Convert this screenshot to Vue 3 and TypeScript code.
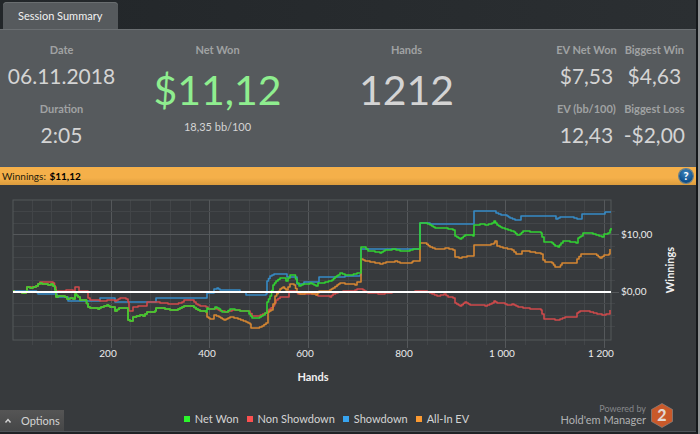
<script setup lang="ts">
interface Stat {
  label: string
  value: string
}

interface Series {
  name: string
  swatch: string
  stroke: string
  points: number[][]
}

const periodStats: Stat[] = [
  { label: 'Date', value: '06.11.2018' },
  { label: 'Duration', value: '2:05' },
]
const evStats: Stat[] = [
  { label: 'EV Net Won', value: '$7,53' },
  { label: 'EV (bb/100)', value: '12,43' },
]
const extremeStats: Stat[] = [
  { label: 'Biggest Win', value: '$4,63' },
  { label: 'Biggest Loss', value: '-$2,00' },
]

// Plot frame in chart units
const left = 13
const right = 611
const top = 15
const bottom = 155

const xTicks = Array.from({ length: 30 }, (_, i) => ({
  x: Math.round(left + (i + 1) * 19.74) - 0.5,
  major: (i + 1) % 5 === 0,
}))
const yTicks = Array.from({ length: 11 }, (_, i) => ({
  y: Math.round(26 + i * 11.5) + 0.5,
  major: i === 2 || i === 7,
}))
const xLabels = [
  { x: 108, text: '200' },
  { x: 207, text: '400' },
  { x: 305, text: '600' },
  { x: 404, text: '800' },
  { x: 502, text: '1 000' },
  { x: 601, text: '1 200' },
]

const parse = (s: string): number[][] => s.split(' ').map((p) => p.split(',').map(Number))

const start =
  '13,106 14,107 22,108 26,107 27,102 30,103 36,101 38,99 40,98 42,99 48,100 51,99 53,101 55,105 56,112 58,111 65,112 67,114 70,113 73,114 75,109 78,112 80,115 85,115 88,122 90,123 98,124 101,122 107,120 110,122 113,122 115,126 119,123 127,123 128,135 130,136 132,136 133,132 140,130 143,131 147,127 155,126 156,123 160,123 165,124 170,125 176,125 180,123 184,121 192,121 196,124 200,126 206,127'

const series: Series[] = [
  {
    name: 'Net Won',
    swatch: '#2bf52b',
    stroke: '#32d232',
    points: parse(
      start +
        ' 207,123 208,124 213,124 215,122 219,124 222,127 226,127 230,124 235,125 240,126 247,126 249,129 252,133 258,133 263,130 265,128 267,117 270,111 273,100 276,96 280,93 284,93 286,96 290,90 294,90 297,98 299,101 303,99 310,98 316,101 318,98 325,97 332,95 335,92 338,90 340,88 345,90 350,90 357,88 360,88 361,62 364,62 368,66 375,67 380,68 385,65 392,64 400,66 407,66 413,64 419,64 420,38 425,38 430,40 435,43 442,43 448,44 453,45 455,51 460,54 465,50 473,51 474,40 480,39 485,40 492,38 494,36 497,40 502,43 508,45 514,47 517,50 520,49 523,46 530,47 541,48 542,52 544,57 552,58 555,61 558,62 561,58 563,56 570,57 576,58 578,53 581,51 583,48 590,48 596,50 602,52 604,49 608,48 610,45 611,43',
    ),
  },
  {
    name: 'Non Showdown',
    swatch: '#fb5050',
    stroke: '#cf4a4b',
    points: parse(
      '13,106 14,107 22,108 26,107 27,102 36,101 40,97 53,98 56,106 63,106 66,105 73,106 75,102 77,102 79,106 86,106 88,113 90,115 100,116 107,115 115,116 120,113 126,114 128,117 129,126 132,126 133,122 138,121 147,121 147,117 150,117 160,118 168,119 175,119 182,117 184,115 192,115 196,119 200,121 206,122 208,124 213,124 215,123 220,126 225,127 232,125 240,126 248,126 252,131 258,131 265,128 267,126 273,121 276,115 280,112 288,112 289,106 295,106 298,109 305,109 312,108 318,111 330,112 333,109 338,107 343,106 355,105 357,104 363,105 368,108 378,109 385,108 392,107 410,107 415,106 425,106 432,109 437,111 444,109 448,112 453,113 455,118 460,121 465,117 470,120 480,120 485,121 492,118 494,116 497,118 505,119 507,120 512,119 518,122 523,123 530,124 541,125 542,129 544,134 555,135 560,134 565,132 575,132 577,128 580,126 590,127 597,129 602,130 606,129 609,129 610,125',
    ),
  },
  {
    name: 'Showdown',
    swatch: '#37a4f0',
    stroke: '#368bc6',
    points: parse(
      '13,106 35,106 38,109 56,109 57,112 67,112 68,116 99,116 100,113 114,113 115,117 155,117 156,113 206,113 207,108 214,108 214,104 217,103 220,105 239,105 240,107 246,107 246,110 266,109 267,96 270,91 274,89 285,89 287,92 295,92 297,99 303,99 304,97 318,97 319,92 345,91 360,90 361,64 419,64 420,38 430,39 473,39 474,26 494,26 496,28 501,30 507,31 510,33 515,35 519,35 521,31 554,31 556,34 560,32 571,32 577,34 581,34 582,29 604,29 605,27 611,27',
    ),
  },
  {
    name: 'All-In EV',
    swatch: '#fb9a32',
    stroke: '#d68732',
    points: parse(
      start +
        ' 207,132 210,134 213,134 214,130 219,132 224,135 230,132 238,134 246,137 250,139 251,143 257,143 262,141 266,138 268,127 271,125 273,119 275,111 280,104 283,102 286,105 290,99 294,100 297,107 300,109 305,108 312,109 316,110 319,106 328,106 333,103 337,100 340,98 345,99 355,100 357,97 361,97 361,74 365,76 370,77 380,79 386,77 395,76 400,78 412,77 413,76 419,76 420,58 425,58 430,62 435,64 445,63 453,65 455,72 459,73 462,72 467,71 473,71 474,60 480,60 488,60 494,58 495,56 497,61 503,63 512,65 516,69 520,69 522,66 530,67 541,69 543,75 545,77 552,78 555,82 559,82 562,78 575,78 577,74 581,69 595,69 600,73 604,70 609,69 610,64',
    ),
  },
]

// Net Won is painted last so that it stays on top
const paintOrder = [series[2], series[1], series[3], series[0]]

// Results change hand by hand, so each segment is drawn as small steps
function stepPath(points: number[][]): string {
  let d = `M${points[0][0]} ${points[0][1]}`
  for (let i = 1; i < points.length; i++) {
    const [x0, y0] = points[i - 1]
    const [x1, y1] = points[i]
    const n = Math.max(1, Math.min(Math.round((x1 - x0) / 2), Math.abs(y1 - y0)))
    for (let k = 1; k <= n; k++) {
      d += `H${(x0 + ((x1 - x0) * k) / n).toFixed(1)}V${(y0 + ((y1 - y0) * k) / n).toFixed(1)}`
    }
  }
  return d
}
</script>

<template>
  <main class="window">
    <div class="tabs" role="tablist">
      <button class="tab" type="button" role="tab" aria-selected="true">Session Summary</button>
    </div>

    <section class="summary">
      <dl class="column">
        <div v-for="s in periodStats" :key="s.label" class="stat">
          <dt>{{ s.label }}</dt>
          <dd>{{ s.value }}</dd>
        </div>
      </dl>
      <dl class="column">
        <div class="stat large">
          <dt>Net Won</dt>
          <dd class="positive">$11,12</dd>
          <dd class="rate">18,35 bb/100</dd>
        </div>
      </dl>
      <dl class="column">
        <div class="stat large">
          <dt>Hands</dt>
          <dd>1212</dd>
        </div>
      </dl>
      <div class="pair">
        <dl class="column">
          <div v-for="s in evStats" :key="s.label" class="stat">
            <dt>{{ s.label }}</dt>
            <dd>{{ s.value }}</dd>
          </div>
        </dl>
        <dl class="column">
          <div v-for="s in extremeStats" :key="s.label" class="stat">
            <dt>{{ s.label }}</dt>
            <dd>{{ s.value }}</dd>
          </div>
        </dl>
      </div>
    </section>

    <div class="bar">
      <span>Winnings: <strong>$11,12</strong></span>
      <button class="help" type="button">?</button>
    </div>

    <svg class="chart" viewBox="0 0 696 212" role="img">
      <g class="grid">
        <line
          v-for="t in xTicks"
          :key="t.x"
          :class="{ major: t.major }"
          :x1="t.x"
          :x2="t.x"
          :y1="top"
          :y2="bottom + (t.major ? 8 : 5)"
        />
        <line
          v-for="t in yTicks"
          :key="t.y"
          :class="{ major: t.major }"
          :x1="left"
          :x2="right + (t.major ? 8 : 4)"
          :y1="t.y"
          :y2="t.y"
        />
        <rect class="frame" :x="left" :y="top" :width="right - left" :height="bottom - top" />
      </g>
      <path
        v-for="s in paintOrder"
        :key="s.name"
        class="series"
        :d="stepPath(s.points)"
        :stroke="s.stroke"
      />
      <line class="zero" :x1="left" :x2="right" y1="107" y2="107" />
      <g class="ticks">
        <text v-for="l in xLabels" :key="l.text" :x="l.x" y="172" text-anchor="middle">{{ l.text }}</text>
        <text x="621" y="53">$10,00</text>
        <text x="621" y="110">$0,00</text>
      </g>
      <text class="axis" x="313" y="196" text-anchor="middle">Hands</text>
      <text class="axis" transform="translate(674 85) rotate(-90)" text-anchor="middle">Winnings</text>
    </svg>

    <footer class="footer">
      <button class="options" type="button">
        <svg width="8" height="6" viewBox="0 0 8 6" aria-hidden="true">
          <path d="M1.5 4.5 4 1.5 6.5 4.5" />
        </svg>
        Options
      </button>
      <ul class="legend">
        <li v-for="s in series" :key="s.name">
          <i :style="{ background: s.swatch }"></i>{{ s.name }}
        </li>
      </ul>
      <div class="brand">
        <p><small>Powered by</small>Hold'em Manager</p>
        <svg width="22" height="25" viewBox="0 0 22 25" aria-hidden="true">
          <path d="M11 .5 21.5 6.5V18.5L11 24.5.5 18.5V6.5Z" fill="#c9592a" stroke="#8a8583" stroke-width=".7" />
          <text x="11" y="18" text-anchor="middle">2</text>
        </svg>
      </div>
    </footer>
  </main>
</template>

<style>
body {
  background: #373a3d;
}
</style>

<style scoped>
.window {
  box-sizing: border-box;
  display: flex;
  flex-direction: column;
  min-height: 100vh;
  margin-right: 2px;
  border-right: 2px solid #15181b;
  border-bottom: 2px solid #1f2225;
  background: #373a3d;
  box-shadow: 2px 0 0 #909294;
  color: #d4d4d4;
  font-family: Lato, "Noto Sans", sans-serif;
  font-size: 11px;
  line-height: 16px;
}

button {
  border: 0;
  padding: 0;
  font: inherit;
  color: inherit;
}

dl, dd, ul, p {
  margin: 0;
  padding: 0;
}

.tabs {
  display: flex;
  padding: 2px 3px 0;
  background: linear-gradient(90deg, #222629, #2b2f32);
}

.tab {
  height: 27px;
  padding: 0 16px 0 15px;
  border-radius: 4px 4px 0 0;
  background: #565a5d;
  box-shadow: inset 0 1px 0 #6a6e70;
  color: #f2f2f2;
}

.summary {
  display: grid;
  grid-template-columns: 123px 1fr 1fr 1fr;
  height: 136px;
  padding-right: 6px;
  border-top: 1px solid #6b6f72;
  border-bottom: 1px solid #4c5967;
  background: #565a5d;
  text-align: center;
}

.column {
  display: grid;
  grid-template-rows: 59px 59px;
  padding-top: 12px;
}

.stat dt {
  color: #a0a2a3;
  font-size: 11px;
  font-weight: 700;
}

.stat dd {
  margin-top: 2px;
  font-size: 21px;
  line-height: 32px;
  white-space: nowrap;
}

.large dd {
  font-size: 41px;
  line-height: 60px;
}

.large .positive {
  color: #8fee8f;
}

.large .rate {
  margin: 0;
  font-size: 11px;
  line-height: 14px;
}

.pair {
  display: flex;
  justify-content: flex-end;
  gap: 7px;
  padding-right: 5px;
}

.bar {
  display: flex;
  align-items: center;
  justify-content: space-between;
  height: 18px;
  padding: 0 3px 0 2px;
  background: linear-gradient(#f5b04a 60%, #dc9c3d);
  color: #241b0c;
  font-size: 10px;
}

.bar strong {
  margin-left: 1px;
  color: #000;
}

.help {
  width: 14px;
  height: 14px;
  border-radius: 50%;
  background: radial-gradient(circle at 50% 30%, #3f86bd, #0d4f8c 70%);
  box-shadow: 0 0 0 1px #5f7f94;
  color: #fff;
  font-size: 11px;
  font-weight: 900;
  line-height: 14px;
}

.chart {
  display: block;
  width: 100%;
}

.grid line {
  stroke: #424548;
}

.grid line.major {
  stroke: #55585b;
}

.frame {
  fill: none;
  stroke: #55585b;
}

.series {
  fill: none;
  stroke-width: 1.6;
  stroke-linejoin: round;
}

.zero {
  stroke: #fff;
  stroke-width: 2;
}

.ticks {
  fill: #ececec;
  font-size: 10px;
}

.axis {
  fill: #f0f0f0;
  font-size: 11px;
  font-weight: 700;
}

.footer {
  display: grid;
  grid-template-columns: 1fr auto 1fr;
  align-items: end;
  margin-top: auto;
  padding-right: 23px;
  border-bottom: 1px solid #50555a;
}

.options {
  display: flex;
  align-items: center;
  justify-self: start;
  gap: 9px;
  height: 21px;
  padding: 0 4px;
  background: linear-gradient(#555, #464748);
}

.options path {
  fill: none;
  stroke: #d4d4d4;
  stroke-width: 1.4;
}

.legend {
  display: flex;
  gap: 8px;
  padding: 0 20px 4px 0;
  list-style: none;
}

.legend li {
  display: flex;
  align-items: center;
  gap: 5px;
}

.legend i {
  width: 6px;
  height: 6px;
}

.brand {
  display: flex;
  justify-self: end;
  gap: 5px;
  padding-bottom: 3px;
  color: #b0b1b2;
  line-height: 11px;
  text-align: right;
}

.brand small {
  display: block;
  color: #85878a;
  font-size: 9px;
}

.brand text {
  fill: #e2d8d2;
  font-size: 16px;
  font-weight: 900;
}
</style>
